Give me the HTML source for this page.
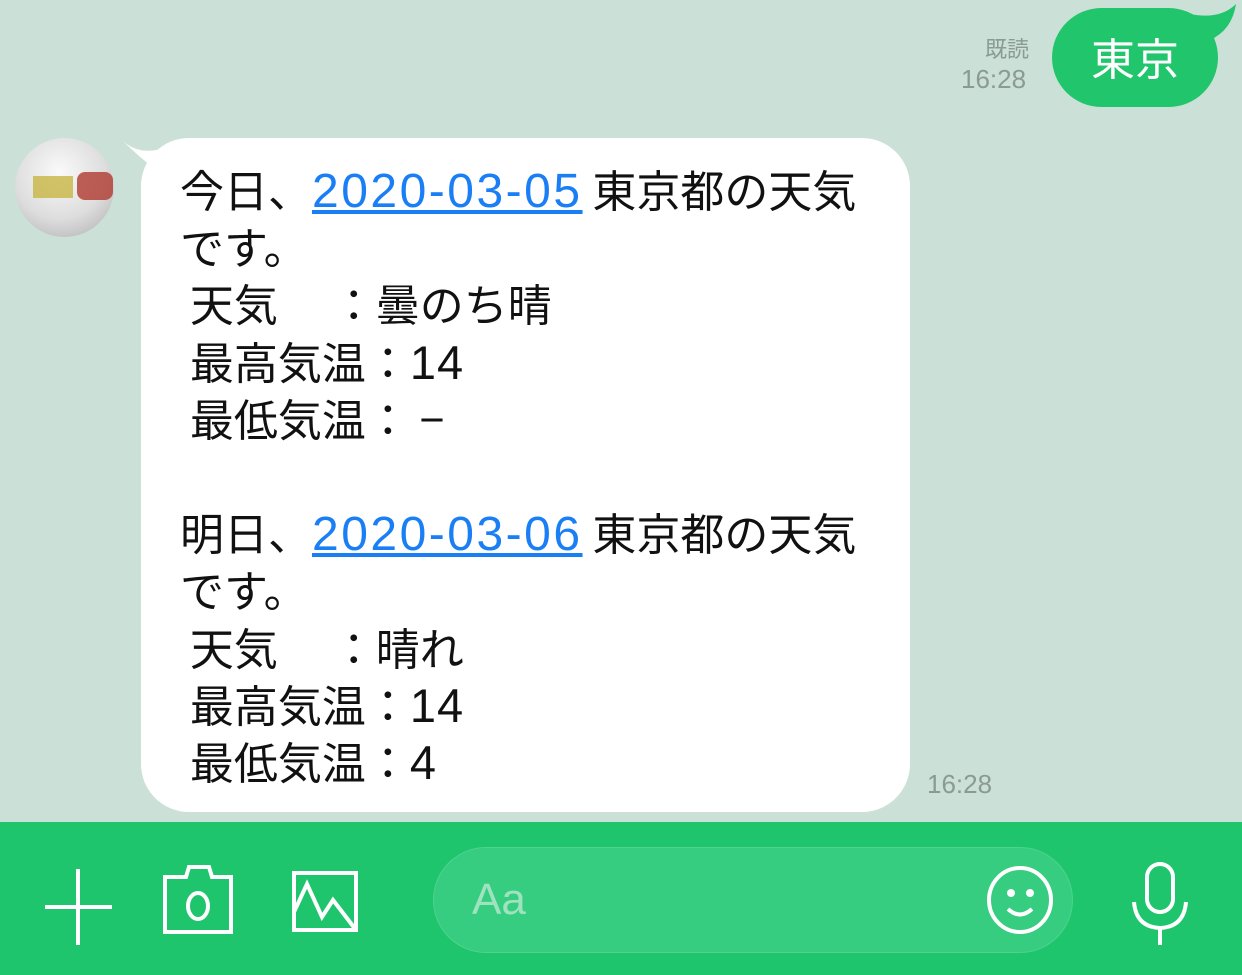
<!DOCTYPE html>
<html><head><meta charset="utf-8"><style>
body{margin:0;width:1242px;height:975px;background:#cbe0d6;position:relative;overflow:hidden;font-family:"Liberation Sans","Noto Sans CJK JP",sans-serif}
.a{position:absolute}
.bub{left:141px;top:138px;width:769px;height:674px;background:#fff;border-radius:48px}
.txt{left:180px;top:160px;font-size:44px;color:#111;font-family:"Noto Sans CJK JP",sans-serif}
.txt div{height:57.2px;line-height:57.2px;white-space:pre}
.txt a{color:#1a7ef5;text-decoration:underline;font-family:"Liberation Sans",sans-serif;font-size:48px;letter-spacing:2.5px}
.n{font-family:"Liberation Sans",sans-serif;font-size:47px;letter-spacing:1px}
.gray{color:#8a9a94;font-size:26px}
</style></head><body>
<div class="a" style="left:1052px;top:8px;width:166px;height:99px;background:#20c56c;border-radius:50px"></div>
<svg class="a" style="left:1180px;top:0" width="62" height="50"><path d="M10 14 Q40 20 56 4 Q52 30 30 40 Z" fill="#20c56c"/></svg>
<div class="a" style="left:1052px;top:28px;width:166px;text-align:center;color:#fff;font-size:44px;font-family:'Noto Sans CJK JP',sans-serif;line-height:56px">東京</div>
<div class="a gray" style="left:985px;top:32px;font-size:22px;font-family:'Noto Sans CJK JP',sans-serif">既読</div>
<div class="a gray" style="left:961px;top:64px">16:28</div>
<div class="a" style="left:15px;top:138px;width:99px;height:99px;border-radius:50%;background:radial-gradient(circle at 45% 35%,#fafafa,#ddd 55%,#aaa)"></div>
<div class="a" style="left:33px;top:176px;width:40px;height:22px;background:#c8b443;opacity:.8"></div>
<div class="a" style="left:77px;top:172px;width:36px;height:28px;background:#b03a30;border-radius:8px;opacity:.8"></div>
<svg class="a" style="left:120px;top:138px" width="60" height="40"><path d="M2 2 Q20 20 50 8 L50 40 Q30 30 2 2Z" fill="#fff"/></svg>
<div class="a bub"></div>
<div class="a txt"><div>今日、<a>2020-03-05</a> 東京都の天気</div><div>です。</div><div> 天気　 ：曇のち晴</div><div> 最高気温：<span class="n">14</span></div><div> 最低気温： −</div><div> </div><div>明日、<a>2020-03-06</a> 東京都の天気</div><div>です。</div><div> 天気　 ：晴れ</div><div> 最高気温：<span class="n">14</span></div><div> 最低気温：<span class="n">4</span></div></div>
<div class="a gray" style="left:927px;top:769px">16:28</div>
<div class="a" style="left:0;top:822px;width:1242px;height:153px;background:#1fc56c"></div>
<div class="a" style="left:433px;top:847px;width:640px;height:106px;border-radius:53px;background:#36cd80;border:1px solid #4fd28f;box-sizing:border-box"></div>
<div class="a" style="left:472px;top:875px;font-size:44px;color:#9fe2bf">Aa</div>
<svg class="a" style="left:0;top:822px" width="1242" height="153" fill="none" stroke="#fff" stroke-width="4">
<path d="M78 47V123M45 85H112"/>
<path d="M165 55H186L189 45H209L212 55H231V110H165Z"/><ellipse cx="198" cy="84" rx="10" ry="13"/>
<rect x="294" y="51" width="62" height="57"/><path d="M294 90L307 62L322 95L333 78L356 108" />
<ellipse cx="1020" cy="78" rx="31" ry="32"/><circle cx="1011" cy="71" r="2" fill="#fff"/><circle cx="1030" cy="71" r="2" fill="#fff"/><path d="M1008 87Q1020 98 1032 87"/>
<rect x="1147" y="42" width="26" height="48" rx="13"/><path d="M1134 80Q1136 105 1160 106Q1184 105 1186 80M1160 106V123"/>
</svg>
</body></html>
